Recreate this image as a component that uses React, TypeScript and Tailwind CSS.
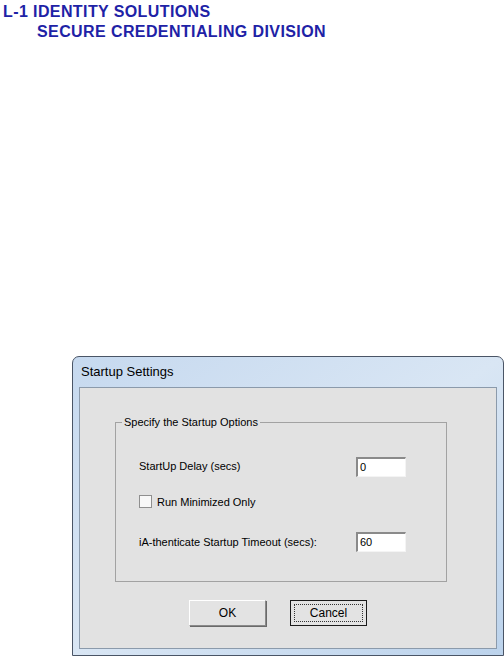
import React from "react";

const ui = { fontFamily: '"Liberation Sans", Arial, sans-serif' };

function TextBox({ value }: { value: string }) {
  return (
    <div className="h-[20px] w-[50px] border-t-2 border-l-2 border-r border-b border-t-[#8a8a8a] border-l-[#8a8a8a] border-r-[#f4f4f4] border-b-[#f4f4f4] bg-white pl-[2px] text-[11px] leading-[17px] text-black">
      {value}
    </div>
  );
}

function Btn({ label, primary }: { label: string; primary?: boolean }) {
  if (primary) {
    return (
      <div className="flex h-[26px] w-[77px] items-center justify-center border border-[#1a1a1a] bg-[#e3e3e3] p-[3px]">
        <div className="flex h-full w-full items-center justify-center border border-dotted border-[#333] text-[12px] text-black">
          {label}
        </div>
      </div>
    );
  }
  return (
    <div className="flex h-[26px] w-[77px] items-center justify-center border border-t-white border-l-white border-r-[#8a8a8a] border-b-[#8a8a8a] bg-[#e3e3e3] text-[12px] text-black shadow-[1px_1px_0_#6a6a6a]">
      {label}
    </div>
  );
}

export default function App() {
  return (
    <div className="min-h-[660px] w-[504px] bg-white" style={ui}>
      {/* Header */}
      <div className="pl-[3px] pt-[2px] text-[16px] font-bold leading-[20px] tracking-[0.4px] text-[#1e22a6]">
        <div>L-1 IDENTITY SOLUTIONS</div>
        <div className="pl-[34px]">SECURE CREDENTIALING DIVISION</div>
      </div>

      {/* Dialog */}
      <div className="ml-[72px] mt-[314px] flex h-[300px] w-[432px] flex-col rounded-t-[7px] border border-[#4a5566] bg-gradient-to-br from-[#c6d9ef] via-[#d9e6f4] to-[#bcd3ec] px-[6px] pb-[6px]">
        <div className="flex h-[30px] items-center pl-[2px] text-[13px] text-black">
          Startup Settings
        </div>
        <div className="flex flex-1 flex-col border border-[#8b9aab] bg-[#e2e2e2] pl-[35px] pr-[49px] pt-[26px]">
          <fieldset className="h-[168px] border border-[#a2a2a2]">
            <legend className="ml-[6px] px-[2px] text-[11px] text-black">
              Specify the Startup Options
            </legend>
            <div className="pl-[23px] pr-[40px] text-[11px] text-black">
              <div className="mt-[26px] flex h-[20px] items-center justify-between">
                <span>StartUp Delay (secs)</span>
                <TextBox value="0" />
              </div>
              <div className="mt-[17px] flex items-center gap-[5px]">
                <div className="h-[13px] w-[13px] border border-[#8f8f8f] bg-[#f8f8f8]" />
                <span>Run Minimized Only</span>
              </div>
              <div className="mt-[22px] flex h-[20px] items-center justify-between">
                <span>iA-thenticate Startup Timeout (secs):</span>
                <TextBox value="60" />
              </div>
            </div>
          </fieldset>
          <div className="mt-[18px] flex gap-[24px] pl-[74px]">
            <Btn label="OK" />
            <Btn label="Cancel" primary />
          </div>
        </div>
      </div>
    </div>
  );
}
